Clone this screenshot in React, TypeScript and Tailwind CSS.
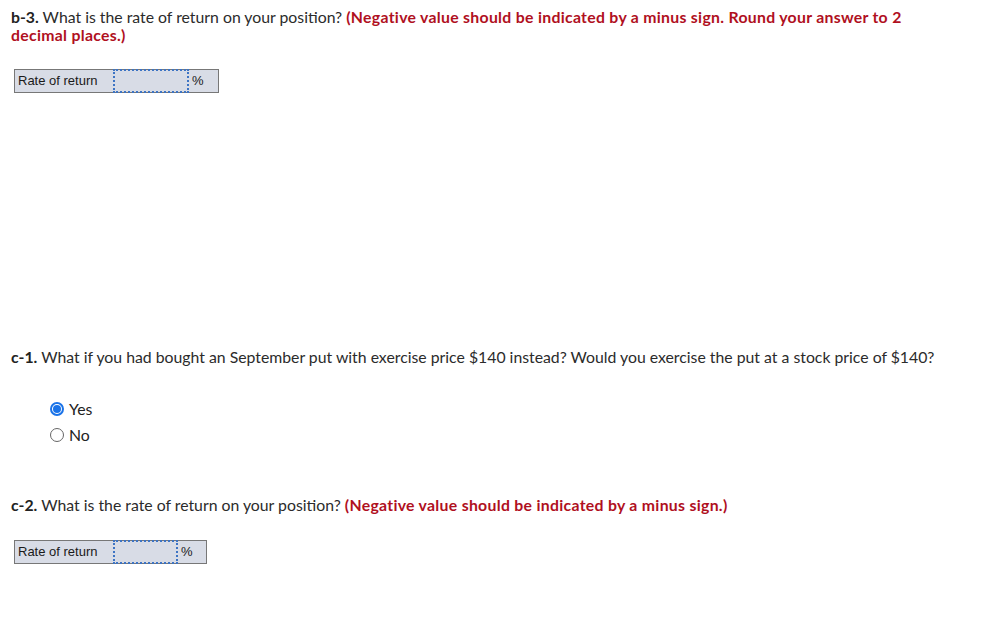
import React from "react";

function RateBox({ w, inputW }: { w: number; inputW: number }) {
  return (
    <div
      className="flex h-[24px] border border-[#777] bg-[#d8dce6] text-[13px] text-[#1a1a1a]"
      style={{ width: w }}
    >
      <div className="w-[98px] shrink-0 pl-[3px] leading-[22px]" style={{ fontFamily: '"Liberation Sans", Arial, sans-serif' }}>
        Rate of return
      </div>
      <div className="shrink-0 border-2 border-dotted border-[#3d74c4] -my-px" style={{ width: inputW }} />
      <div className="pl-[3px] leading-[22px]" style={{ fontFamily: '"Liberation Sans", Arial, sans-serif' }}>
        %
      </div>
    </div>
  );
}

function Radio({ checked, label }: { checked: boolean; label: string }) {
  return (
    <div className="flex items-center gap-[5px] h-[26px]">
      {checked ? (
        <span className="w-[14px] h-[14px] rounded-full border-2 border-[#1a73e8] bg-white flex items-center justify-center">
          <span className="w-[8px] h-[8px] rounded-full bg-[#1a73e8]" />
        </span>
      ) : (
        <span className="w-[14px] h-[14px] rounded-full border border-[#666] bg-white" />
      )}
      <span className="text-[15.8px] text-[#222]">{label}</span>
    </div>
  );
}

export default function App() {
  return (
    <div
      className="w-[981px] h-[640px] bg-white text-[15.8px] leading-[18px] text-[#2b2b2b] overflow-hidden"
      style={{ fontFamily: 'Lato, "Open Sans", sans-serif' }}
    >
      <div className="pl-[11px] pr-[60px] pt-[8px]">
        <p>
          <b className="font-bold text-[#222]">b-3.</b> What is the rate of return on your position?{" "}
          <b className="font-bold text-[#b0101e] tracking-[0.3px]">
            (Negative value should be indicated by a minus sign. Round your answer to 2 decimal places.)
          </b>
        </p>
      </div>
      <div className="pl-[14px] mt-[25px]">
        <RateBox w={205} inputW={76} />
      </div>

      <div className="pl-[11px] mt-[255px]">
        <p>
          <b className="font-bold text-[#222]">c-1.</b> What if you had bought an September put with exercise price $140 instead? Would you exercise the put at a stock price of $140?
        </p>
      </div>
      <div className="pl-[50px] mt-[30px] flex flex-col">
        <Radio checked label="Yes" />
        <Radio checked={false} label="No" />
      </div>

      <div className="pl-[11px] mt-[48px]">
        <p>
          <b className="font-bold text-[#222]">c-2.</b> What is the rate of return on your position?{" "}
          <b className="font-bold text-[#b0101e] tracking-[0.3px]">(Negative value should be indicated by a minus sign.)</b>
        </p>
      </div>
      <div className="pl-[14px] mt-[26px]">
        <RateBox w={193} inputW={65} />
      </div>
    </div>
  );
}
